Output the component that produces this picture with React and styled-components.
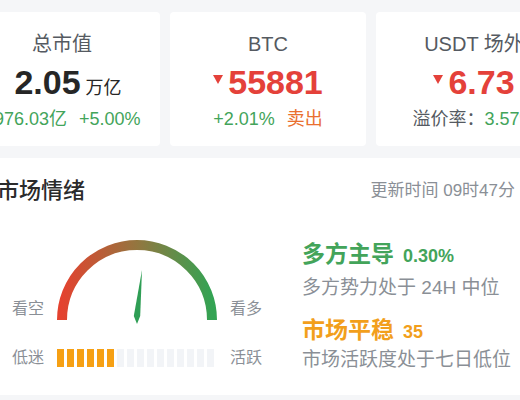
import React from 'react';
import styled, { createGlobalStyle } from 'styled-components';

const GlobalStyle = createGlobalStyle`
  html, body {
    margin: 0;
    padding: 0;
    background: #f5f6f8;
  }
  body {
    font-family: "Liberation Sans", "Noto Sans CJK SC", sans-serif;
  }
`;

const colors = {
  up: '#43a45a',
  down: '#e4413a',
  sell: '#ea6f2f',
  calm: '#f29f1c',
  text: '#262626',
  label: '#555a61',
  muted: '#8a8f96',
};

const Page = styled.div`
  width: 520px;
  height: 400px;
  overflow: hidden;
  background: #f5f6f8;
`;

const Strip = styled.div`
  margin-left: -36px;
  width: 620px;
  padding-top: 12px;
`;

const CardRow = styled.div`
  display: flex;
  gap: 10px;
`;

const Card = styled.div`
  flex: 0 0 196px;
  height: 134px;
  box-sizing: border-box;
  padding-top: 20px;
  background: #fff;
  border-radius: 4px;
  display: flex;
  flex-direction: column;
  align-items: center;
`;

const CardTitle = styled.div`
  font-size: 20px;
  line-height: 24px;
  color: ${colors.label};
  white-space: nowrap;
`;

const ValueRow = styled.div`
  display: flex;
  align-items: baseline;
  margin-top: 4px;
  padding-left: ${p => p.$shift || 0}px;
  height: 44px;
  white-space: nowrap;
`;

const Value = styled.span`
  font-size: 34px;
  line-height: 44px;
  font-weight: 700;
  color: ${p => p.$tone === 'down' ? colors.down : colors.text};
`;

const Unit = styled.span`
  font-size: 18px;
  margin-left: 5px;
  color: ${colors.text};
`;

const DownMark = styled.span`
  align-self: flex-start;
  margin: 15px 5px 0 0;
  width: 0;
  height: 0;
  border-left: 5.5px solid transparent;
  border-right: 5.5px solid transparent;
  border-top: 9px solid ${colors.down};
`;

const SubRow = styled.div`
  display: flex;
  gap: ${p => p.$gap}px;
  margin-top: 2px;
  font-size: 18px;
  line-height: 26px;
  white-space: nowrap;
`;

const Sub = styled.span`
  color: ${p => colors[p.$tone] || colors.label};
`;

const Panel = styled.div`
  margin: 12px 0 0 24px;
  width: 560px;
  height: 237px;
  box-sizing: border-box;
  padding: 18px 33px 0 9px;
  background: #fff;
`;

const PanelHead = styled.div`
  display: flex;
  justify-content: space-between;
  align-items: center;
  height: 24px;
`;

const PanelTitle = styled.div`
  font-size: 22px;
  font-weight: 500;
  color: #2b2b2b;
`;

const Updated = styled.div`
  font-size: 17px;
  color: ${colors.muted};
  white-space: nowrap;
`;

const Body = styled.div`
  display: flex;
  gap: 40px;
  margin: 40px 0 0 15px;
`;

const GaugeCol = styled.div`
  display: flex;
  flex-direction: column;
`;

const MeterRow = styled.div`
  display: flex;
  align-items: flex-end;
  gap: 13px;
  margin-top: ${p => p.$gap || 0}px;
`;

const Side = styled.span`
  font-size: 16px;
  line-height: 22px;
  color: ${colors.muted};
  margin-bottom: ${p => p.$lift || 0}px;
  white-space: nowrap;
`;

const Bars = styled.div`
  display: flex;
  gap: 3px;
  width: 160px;
  margin-bottom: 2px;
`;

const Bar = styled.span`
  width: 7px;
  height: 18px;
  background: ${p => p.$on ? '#f6a014' : '#f2f4f7'};
`;

const InfoCol = styled.div`
  display: flex;
  flex-direction: column;
`;

const Verdict = styled.div`
  display: flex;
  align-items: baseline;
  gap: 9px;
  margin-top: ${p => p.$gap || 0}px;
  line-height: 28px;
  color: ${p => colors[p.$tone]};
  white-space: nowrap;
`;

const VerdictName = styled.span`
  font-size: 23px;
  font-weight: 700;
`;

const VerdictNum = styled.span`
  font-size: 18px;
  font-weight: 700;
`;

const Note = styled.div`
  font-size: 19px;
  line-height: 24px;
  color: ${colors.muted};
  margin-top: ${p => p.$gap || 0}px;
  white-space: nowrap;
`;

const Gauge = () => (
  <svg width="160" height="86" viewBox="0 0 160 86">
    <defs>
      <linearGradient id="arcFill" x1="0" y1="0" x2="1" y2="0">
        <stop offset="0" stopColor="#e4422f" />
        <stop offset="0.5" stopColor="#93763f" />
        <stop offset="1" stopColor="#33a353" />
      </linearGradient>
    </defs>
    <path d="M 5 80 A 75 75 0 0 1 155 80" fill="none" stroke="url(#arcFill)" strokeWidth="10" />
    <polygon points="85,30 83.2,76 80,84 76.8,76" fill="#2f9e55" />
  </svg>
);

const stats = [
  { title: '总市值', value: '2.05', unit: '万亿', gap: 12, shift: 12, subs: [['+976.03亿', 'up'], ['+5.00%', 'up']] },
  { title: 'BTC', value: '55881', down: true, gap: 12, subs: [['+2.01%', 'up'], ['卖出', 'sell']] },
  { title: 'USDT 场外', value: '6.73', down: true, gap: 0, subs: [['溢价率：', 'label'], ['3.57%', 'up']] },
];

export default function App() {
  const level = 6;
  return (
    <Page>
      <GlobalStyle />
      <Strip>
        <CardRow>
          {stats.map(s => (
            <Card key={s.title}>
              <CardTitle>{s.title}</CardTitle>
              <ValueRow $shift={s.shift}>
                {s.down && <DownMark />}
                <Value $tone={s.down ? 'down' : 'flat'}>{s.value}</Value>
                {s.unit && <Unit>{s.unit}</Unit>}
              </ValueRow>
              <SubRow $gap={s.gap}>
                {s.subs.map(([t, tone]) => <Sub key={t} $tone={tone}>{t}</Sub>)}
              </SubRow>
            </Card>
          ))}
        </CardRow>
        <Panel>
          <PanelHead>
            <PanelTitle>市场情绪</PanelTitle>
            <Updated>更新时间 09时47分</Updated>
          </PanelHead>
          <Body>
            <GaugeCol>
              <MeterRow>
                <Side $lift={6}>看空</Side>
                <Gauge />
                <Side $lift={6}>看多</Side>
              </MeterRow>
              <MeterRow $gap={21}>
                <Side>低迷</Side>
                <Bars>
                  {Array.from({ length: 16 }, (_, i) => <Bar key={i} $on={i < level} />)}
                </Bars>
                <Side>活跃</Side>
              </MeterRow>
            </GaugeCol>
            <InfoCol>
              <Verdict $tone="up">
                <VerdictName>多方主导</VerdictName>
                <VerdictNum>0.30%</VerdictNum>
              </Verdict>
              <Note $gap={6}>多方势力处于 24H 中位</Note>
              <Verdict $tone="calm" $gap={16}>
                <VerdictName>市场平稳</VerdictName>
                <VerdictNum>35</VerdictNum>
              </Verdict>
              <Note $gap={2}>市场活跃度处于七日低位</Note>
            </InfoCol>
          </Body>
        </Panel>
      </Strip>
    </Page>
  );
}
